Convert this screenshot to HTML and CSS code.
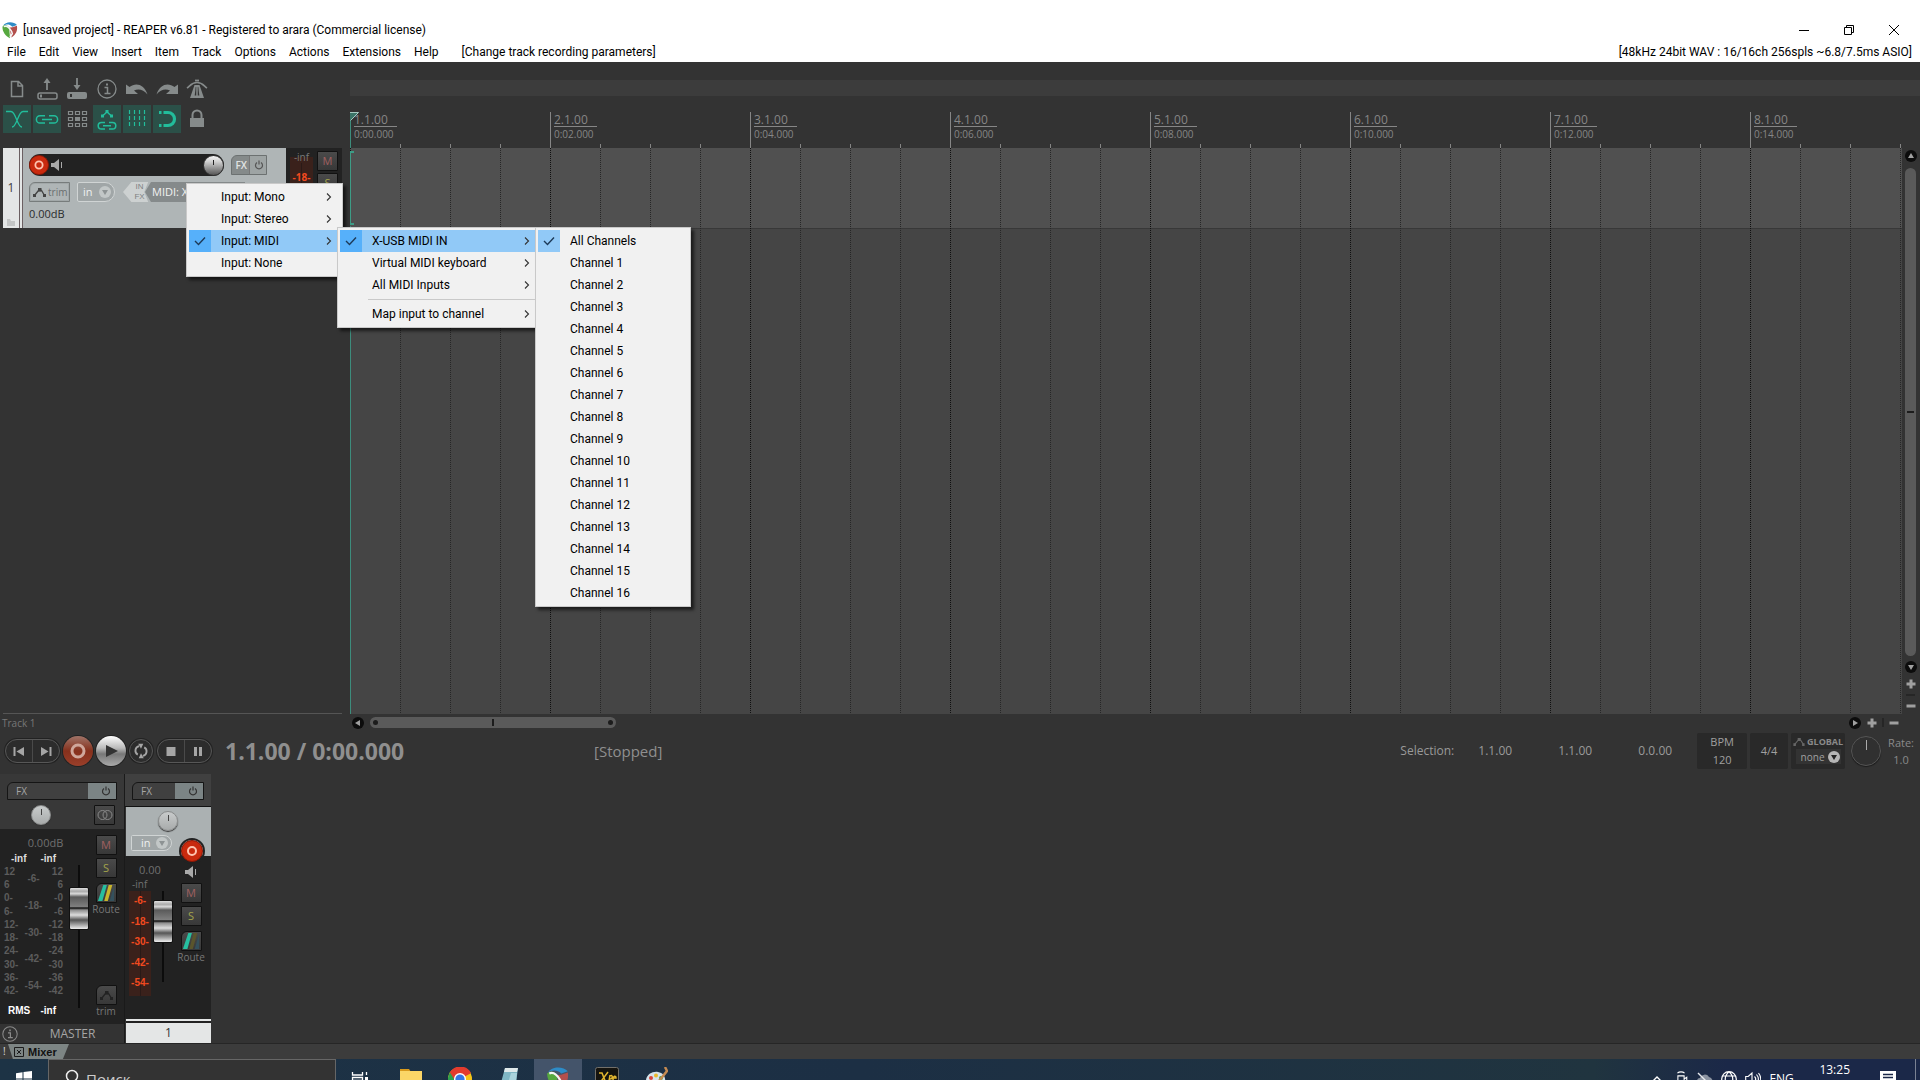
FILE: index.html
```html
<!DOCTYPE html>
<html lang="en">
<head>
<meta charset="utf-8">
<title>[unsaved project] - REAPER v6.81</title>
<link rel="stylesheet" href="styles.css">
</head>
<body>
<svg class="defs" aria-hidden="true">
  <symbol id="power" viewBox="0 0 10 10"><path d="M3 2.500a3.500 3.500 0 1 0 4 0M5 .5v4" fill="none" stroke="currentColor" stroke-width="1.200"/></symbol>
  <symbol id="drop" viewBox="0 0 12 12"><circle cx="6" cy="6" r="6" fill="currentColor"/><path d="M3 4h6l-3 5z" class="drop-arrow"/></symbol>
  <symbol id="speaker" viewBox="0 0 12 12"><path d="M0 4h3l5-4v12L3 8H0z" fill="currentColor"/><path d="M10.500 3v6" stroke="currentColor"/></symbol>
  <symbol id="rec" viewBox="0 0 22 22"><circle cx="11" cy="11" r="10.500" fill="#c92a0e" stroke="#8c1705"/><circle cx="11" cy="11" r="4" fill="none" stroke="#ffc4b0" stroke-width="2"/></symbol>
  <symbol id="env" viewBox="0 0 13 9"><path d="M1.500 7.500l4-5 3 0 3 5" fill="none" stroke="currentColor" stroke-width="1.300"/><path d="M0 6h3v3H0zM5 0h3.500v3.500H5zM10 6h3v3h-3z" fill="currentColor"/></symbol>
  <symbol id="chev" viewBox="0 0 6 8"><path d="M1 .5L4.500 4 1 7.500" fill="none" stroke="#333" stroke-width="1.100"/></symbol>
  <symbol id="check" viewBox="0 0 12 10"><path d="M1 5l3.500 3.500L11 1.500" fill="none" stroke="#1d3a58" stroke-width="1.400"/></symbol>
  <symbol id="reaper" viewBox="0 0 20 22"><path d="M1 5C4-1 15-1 19 4l-6 2C9 2 4 3 1 5z" fill="#2e8cc7"/><path d="M0 6c3-3 8-2 9 2l1 13C4 18 0 12 0 6z" fill="#56a83f"/><path d="M9 7c3 1 7-1 10-2 1 6-1 11-7 15z" fill="#b34f4c"/><path d="M2 6c4-2 7 1 10 6l1 3-3 5" fill="none" stroke="#f4f4f4" stroke-width="2"/></symbol>
  <symbol id="arrow" viewBox="0 0 12 12"><circle cx="6" cy="6" r="6" fill="#0c0c0c"/><path d="M6 3l3 5H3z" fill="#a0a0a0"/></symbol>
  <symbol id="plus" viewBox="0 0 10 10"><path d="M5 .5v9M.5 5h9" stroke="#a0a0a0" stroke-width="3"/></symbol>
  <symbol id="minus" viewBox="0 0 10 10"><path d="M.5 5h9" stroke="#a0a0a0" stroke-width="3"/></symbol>
  <symbol id="info" viewBox="0 0 20 20"><circle cx="10" cy="10" r="9" fill="none" stroke="currentColor" stroke-width="1.300"/><path d="M7.500 8.500h3v5.500M7.500 14.500h6" fill="none" stroke="currentColor" stroke-width="1.500"/><path d="M9 4.500h2v2H9z" fill="currentColor"/></symbol>
</svg>

<header class="window-head">
  <div class="titlebar">
    <svg class="app-icon" viewBox="0 0 20 22"><use href="#reaper"/></svg>
    <span class="title">[unsaved project] - REAPER v6.81 - Registered to arara (Commercial license)</span>
    <div class="window-buttons">
      <button aria-label="Minimize"><svg viewBox="0 0 12 12"><path d="M1 6.500h10" stroke="#000"/></svg></button>
      <button aria-label="Restore"><svg viewBox="0 0 12 12"><path d="M1.500 3.500h7v7h-7zM3.500 3.500v-2h7v7h-2" fill="none" stroke="#000"/></svg></button>
      <button aria-label="Close"><svg viewBox="0 0 12 12"><path d="M1 1l10 10M11 1L1 11" stroke="#000"/></svg></button>
    </div>
  </div>
  <nav class="menubar">
    <button>File</button><button>Edit</button><button>View</button><button>Insert</button><button>Item</button><button>Track</button><button>Options</button><button>Actions</button><button>Extensions</button><button>Help</button>
    <span class="last-action">[Change track recording parameters]</span>
    <span class="audio-info">[48kHz 24bit WAV : 16/16ch 256spls ~6.8/7.5ms ASIO]</span>
  </nav>
</header>

<section class="top">
  <div class="toolbar">
    <button aria-label="New project"><svg viewBox="0 0 28 28"><path d="M8.500 6.500h7l4 4v11h-11zM15 6.500v4.500h4.500" fill="none" stroke="currentColor" stroke-width="1.500"/></svg></button>
    <button aria-label="Open project"><svg viewBox="0 0 28 28"><rect x="5" y="18" width="19" height="6" rx="2" fill="none" stroke="currentColor" stroke-width="1.500"/><path d="M8 19.500v3" stroke="currentColor" stroke-width="2"/><path d="M14 15V7" stroke="currentColor" stroke-width="1.800"/><path d="M10.500 8L14 3l3.500 5z" fill="currentColor"/></svg></button>
    <button aria-label="Save project"><svg viewBox="0 0 28 28"><path d="M6 17h16a2 2 0 0 1 2 2v3a2 2 0 0 1-2 2H6a2 2 0 0 1-2-2v-3a2 2 0 0 1 2-2zm1 2v3h2v-3z" fill="currentColor" fill-rule="evenodd"/><path d="M14 3v7" stroke="currentColor" stroke-width="1.800"/><path d="M10.500 10L14 15l3.500-5z" fill="currentColor"/></svg></button>
    <button aria-label="Project settings"><svg viewBox="0 0 28 28"><use href="#info" x="4" y="4" width="20" height="20"/></svg></button>
    <button aria-label="Undo"><svg viewBox="0 0 28 28"><path d="M3 9.500l3.500 2.500c6-5 15-3 18 7.500-4-5-9-6-13.500-4l4 3.500H3z" fill="currentColor"/></svg></button>
    <button aria-label="Redo"><svg viewBox="0 0 28 28"><path d="M25 9.500L21.500 12c-6-5-15-3-18 7.500 4-5 9-6 13.500-4L13 19h12z" fill="currentColor"/></svg></button>
    <button aria-label="Metronome"><svg viewBox="0 0 28 28"><path d="M11.500 10h5l4.500 13H7z" fill="currentColor"/><path d="M12.700 12l-1 8.500h4.600l-1-8.500z" fill="#333"/><path d="M14 11v10" stroke="currentColor" stroke-width="1.500"/><path d="M4 13c3-2 4.500-5.500 10-5.500s7 3.500 10 5.500" fill="none" stroke="currentColor" stroke-width="1.700"/><path d="M12 5.500h4" stroke="currentColor" stroke-width="1.800"/></svg></button>
    <button class="on" aria-label="Auto crossfade"><svg viewBox="0 0 28 28"><path d="M3 6.500h5c5 0 6 15.500 11 15.500M25 6.500h-5c-5 0-6 15.500-11 15.500" fill="none" stroke="currentColor" stroke-width="1.300"/></svg></button>
    <button class="on" aria-label="Item grouping"><svg viewBox="0 0 28 28"><path d="M12 18H7a3.600 3.600 0 0 1 0-7.200h5M16 10.800h5a3.600 3.600 0 0 1 0 7.200h-5M9 14.400h10" fill="none" stroke="currentColor" stroke-width="1.500"/></svg></button>
    <button aria-label="Ripple editing"><svg viewBox="0 0 28 28"><path d="M5.500 6.500h4v3h-4zM12.500 6.500h4v3h-4zM19.500 6.500h4v3h-4zM5.500 12.500h4v3h-4zM19.500 12.500h4v3h-4zM5.500 18.500h4v3h-4zM12.500 18.500h4v3h-4zM19.500 18.500h4v3h-4z" fill="none" stroke="currentColor" stroke-width="1.200"/><path d="M12 12h5v4h-5z" fill="currentColor"/></svg></button>
    <button class="on" aria-label="Envelope move"><svg viewBox="0 0 28 28"><path d="M9.500 11l4.500-4 4.500 4" fill="none" stroke="currentColor" stroke-width="1.400"/><path d="M8 9.500h3v3H8zM12.500 5h3v3h-3zM17 9.500h3v3h-3z" fill="currentColor"/><path d="M12 24H8.500a3.300 3.300 0 0 1 0-6.600H12M16 17.400h3.500a3.300 3.300 0 0 1 0 6.600H16M10 20.700h8" fill="none" stroke="currentColor" stroke-width="1.500"/></svg></button>
    <button class="on" aria-label="Grid lines"><svg viewBox="0 0 28 28"><path d="M6.500 5v18M11.500 5v18M16.500 5v18M21.500 5v18" stroke="currentColor" stroke-width="1.200" stroke-dasharray="4 2"/></svg></button>
    <button class="on" aria-label="Snapping"><svg viewBox="0 0 28 28"><path d="M10.500 7.500h4.500a6.500 6.500 0 0 1 0 13h-4.500" fill="none" stroke="currentColor" stroke-width="3.200"/><path d="M6 6h2.500v3H6zM6 19h2.500v3H6z" fill="currentColor"/></svg></button>
    <button aria-label="Locking"><svg viewBox="0 0 28 28"><path d="M7 13h14v9H7z" fill="currentColor"/><path d="M9.500 13v-3a4.500 4.500 0 0 1 9 0v3" fill="none" stroke="currentColor" stroke-width="2"/></svg></button>
  </div>
  <div class="timeline-head">
    <div class="region-bar"></div>
    <div class="ruler">
      <svg class="playhead" viewBox="0 0 9 9"><path d="M0 0h9L0 9z" fill="#3a7568"/><path d="M0 .5h8.500L.5 8.500" fill="none" stroke="#a5c9c0"/></svg>
      <div class="mark mark-first"><span class="beat">1.1.00</span><span class="time">0:00.000</span></div>
      <div class="mark"><span class="beat">2.1.00</span><span class="time">0:02.000</span></div>
      <div class="mark"><span class="beat">3.1.00</span><span class="time">0:04.000</span></div>
      <div class="mark"><span class="beat">4.1.00</span><span class="time">0:06.000</span></div>
      <div class="mark"><span class="beat">5.1.00</span><span class="time">0:08.000</span></div>
      <div class="mark"><span class="beat">6.1.00</span><span class="time">0:10.000</span></div>
      <div class="mark"><span class="beat">7.1.00</span><span class="time">0:12.000</span></div>
      <div class="mark"><span class="beat">8.1.00</span><span class="time">0:14.000</span></div>
    </div>
  </div>
</section>

<main class="workspace">
  <section class="tracks">
    <div class="track">
      <div class="track-no"><span>1</span><svg viewBox="0 0 8 7"><path d="M0 0h3l1 2h4v5H0z" fill="#c3c5c5"/></svg></div>
      <div class="track-edge"></div>
      <div class="track-panel">
        <div class="panel-row">
          <div class="name-bar">
            <button class="rec-btn" aria-label="Record arm"><svg viewBox="0 0 22 22"><use href="#rec"/></svg></button>
            <svg class="speaker" viewBox="0 0 12 12"><use href="#speaker"/></svg>
            <button class="knob-metal" aria-label="Volume"></button>
          </div>
          <button class="fx-btn"><span>FX</span><span class="fx-power"><svg viewBox="0 0 10 10"><use href="#power"/></svg></span></button>
        </div>
        <div class="panel-row panel-row-2">
          <button class="trim-btn"><svg viewBox="0 0 13 9"><use href="#env"/></svg>trim</button>
          <label class="pick pick-in"><select aria-label="Monitor"><option>in</option></select><svg viewBox="0 0 12 12"><use href="#drop"/></svg></label>
          <button class="input-btn"><span class="in-fx"><span>IN</span><span>FX</span></span><span class="input-name">MIDI: X-USB</span></button>
        </div>
        <span class="track-db">0.00dB</span>
      </div>
      <div class="track-meter">
        <div class="tm-scale"><span class="tm-inf">-inf</span><span class="tm-red">-18-</span></div>
        <div class="tm-buttons"><button class="sq mute">M</button><button class="sq solo">S</button></div>
      </div>
    </div>
    <div class="tracks-rule"></div>
  </section>
  <section class="arrange">
    <div class="lane"></div>
    <svg class="grid" aria-hidden="true">
      <defs><pattern id="gridp" width="200" height="2" patternUnits="userSpaceOnUse"><path d="M0 0h1v1H0z" fill="#101010"/><path d="M50 0h1v1h-1zM100 0h1v1h-1zM150 0h1v1h-1z" fill="#262626"/></pattern></defs>
      <rect width="100%" height="100%" fill="url(#gridp)"/>
    </svg>
    <div class="cursor"></div>
    <div class="bracket"></div>
  </section>
  <aside class="vscroll">
    <svg viewBox="0 0 12 12"><use href="#arrow"/></svg>
    <div class="vbar"></div>
    <svg class="flip" viewBox="0 0 12 12"><use href="#arrow"/></svg>
    <svg class="zoom" viewBox="0 0 10 10"><use href="#plus"/></svg>
    <i></i>
    <svg class="zoom" viewBox="0 0 10 10"><use href="#minus"/></svg>
  </aside>
</main>

<div class="hscroll">
  <span class="track-caption">Track 1</span>
  <svg class="left" viewBox="0 0 12 12"><use href="#arrow"/></svg>
  <div class="hbar"><b></b><i></i><b></b></div>
  <svg class="right" viewBox="0 0 12 12"><use href="#arrow"/></svg>
  <svg class="zoom" viewBox="0 0 10 10"><use href="#plus"/></svg>
  <i></i>
  <svg class="zoom" viewBox="0 0 10 10"><use href="#minus"/></svg>
</div>

<section class="transport">
  <div class="pill">
    <button aria-label="Go to start"><svg viewBox="0 0 12 12"><path d="M1.500 2v9" stroke="currentColor" stroke-width="2"/><path d="M11 2v9L3.500 6.500z" fill="currentColor"/></svg></button>
    <button aria-label="Go to end"><svg viewBox="0 0 12 12"><path d="M10.500 2v9" stroke="currentColor" stroke-width="2"/><path d="M1 2v9l7.500-4.500z" fill="currentColor"/></svg></button>
  </div>
  <button class="round record" aria-label="Record"><svg viewBox="0 0 30 30"><circle cx="15" cy="15" r="6" fill="none" stroke="#cfa79b" stroke-width="3"/></svg></button>
  <button class="round play" aria-label="Play"><svg viewBox="0 0 30 30"><path d="M10 9l12 6-12 6z" fill="#333"/></svg></button>
  <button class="round repeat" aria-label="Repeat"><svg viewBox="0 0 24 24"><path d="M8.500 16A5 5 0 0 1 10 6.700M15.500 8A5 5 0 0 1 14 17.300" fill="none" stroke="#a5a5a5" stroke-width="2"/><path d="M9 4h5.500L12 9.500zM15 20H9.500l2.500-5.500z" fill="#a5a5a5"/></svg></button>
  <div class="pill">
    <button aria-label="Stop"><svg viewBox="0 0 12 12"><path d="M1.500 2h9v9h-9z" fill="currentColor"/></svg></button>
    <button aria-label="Pause"><svg viewBox="0 0 12 12"><path d="M2 2h3v9H2zM7 2h3v9H7z" fill="currentColor"/></svg></button>
  </div>
  <span class="position">1.1.00 / 0:00.000</span>
  <span class="state">[Stopped]</span>
  <div class="selection"><span class="sel-label">Selection:</span><span>1.1.00</span><span>1.1.00</span><span>0.0.00</span></div>
  <div class="box bpm"><span>BPM</span><span>120</span></div>
  <div class="box sig">4/4</div>
  <div class="box global">
    <span class="global-label"><svg viewBox="0 0 13 9"><use href="#env"/></svg>GLOBAL</span>
    <label class="pick pick-global"><select aria-label="Global automation"><option>none</option></select><svg viewBox="0 0 12 12"><use href="#drop"/></svg></label>
  </div>
  <button class="rate-knob" aria-label="Play rate"></button>
  <div class="rate"><span>Rate:</span><span>1.0</span></div>
</section>

<section class="mixer">
  <div class="strip master">
    <div class="strip-head">
      <button class="fx-slot"><span>FX</span><span class="slot-power"><svg viewBox="0 0 10 10"><use href="#power"/></svg></span></button>
      <div class="pan-row">
        <button class="knob-flat" aria-label="Pan"></button>
        <button class="sq mono" aria-label="Mono"><svg viewBox="0 0 16 12"><circle cx="5.500" cy="6" r="4.500"/><circle cx="10.500" cy="6" r="4.500"/></svg></button>
      </div>
    </div>
    <div class="strip-body">
      <div class="levels">
        <span class="gain">0.00dB</span>
        <div class="peaks"><span>-inf</span><span>-inf</span></div>
        <div class="scales">
          <div class="scale"><span>12</span><span>6</span><span>0-</span><span>6-</span><span>12-</span><span>18-</span><span>24-</span><span>30-</span><span>36-</span><span>42-</span></div>
          <div class="scale scale-mid"><span>-6-</span><span>-18-</span><span>-30-</span><span>-42-</span><span>-54-</span></div>
          <div class="scale scale-right"><span>12</span><span>6</span><span>-0</span><span>-6</span><span>-12</span><span>-18</span><span>-24</span><span>-30</span><span>-36</span><span>-42</span></div>
        </div>
        <div class="peaks rms"><span>RMS</span><span>-inf</span></div>
      </div>
      <input class="fader fader-master" type="range" min="0" max="100" value="78" aria-label="Master volume">
      <div class="strip-buttons">
        <button class="sq mute">M</button>
        <button class="sq solo">S</button>
        <button class="sq route" aria-label="Route"><svg viewBox="0 0 20 20"><path d="M1 19L7 1h4L6 19z" fill="#27bfa0"/><path d="M8 19l5-18h4l-5 18z" fill="#c9b52c"/><path d="M14 19l5-17v17z" fill="#34505c"/></svg></button>
        <span class="cap">Route</span>
        <button class="sq trim" aria-label="Trim"><svg viewBox="0 0 13 9"><use href="#env"/></svg></button>
        <span class="cap">trim</span>
      </div>
    </div>
    <div class="strip-foot"><svg viewBox="0 0 20 20"><use href="#info"/></svg><span>MASTER</span></div>
  </div>

  <div class="strip channel">
    <div class="chan-head"><button class="fx-slot"><span>FX</span><span class="slot-power"><svg viewBox="0 0 10 10"><use href="#power"/></svg></span></button></div>
    <div class="chan-light">
      <button class="knob-flat" aria-label="Pan"></button>
      <label class="pick pick-in"><select aria-label="Monitor"><option>in</option></select><svg viewBox="0 0 12 12"><use href="#drop"/></svg></label>
      <button class="rec-btn chan-rec" aria-label="Record arm"><svg viewBox="0 0 22 22"><use href="#rec"/></svg></button>
    </div>
    <div class="chan-body">
      <div class="chan-levels">
        <span class="gain">0.00</span>
        <span class="chan-inf">-inf</span>
        <div class="chan-meter"><span>-6-</span><span>-18-</span><span>-30-</span><span>-42-</span><span>-54-</span></div>
      </div>
      <input class="fader fader-chan" type="range" min="0" max="100" value="82" aria-label="Track volume">
      <div class="strip-buttons">
        <svg class="speaker" viewBox="0 0 12 12"><use href="#speaker"/></svg>
        <button class="sq mute">M</button>
        <button class="sq solo">S</button>
        <button class="sq route" aria-label="Route"><svg viewBox="0 0 20 20"><path d="M1 19L7 1h4L6 19z" fill="#27bfa0"/><path d="M8 19l5-18h4l-5 18z" fill="#5a552c"/><path d="M14 19l5-17v17z" fill="#34505c"/></svg></button>
        <span class="cap">Route</span>
      </div>
    </div>
    <div class="chan-foot">1</div>
  </div>
</section>

<div class="docker"><span class="bang">!</span><button class="dock-tab"><svg viewBox="0 0 10 10"><path d="M.5.5h9v9h-9zM3 3l4 4M7 3L3 7" fill="none" stroke="#1c1c1c"/></svg>Mixer</button></div>

<footer class="taskbar">
  <button class="start" aria-label="Start"><svg viewBox="0 0 16 16"><path d="M0 2.200l6.500-1v6.300H0zM7.500 1L16 0v7.500H7.500zM0 8.500h6.500v6.300l-6.500-1zM7.500 8.500H16V16l-8.500-1z" fill="#fff"/></svg></button>
  <label class="search"><svg viewBox="0 0 16 20"><circle cx="9" cy="7" r="5.500" fill="none" stroke="#eee" stroke-width="1.500"/><path d="M5.500 11L1 17" stroke="#eee" stroke-width="1.500"/></svg><input type="text" placeholder="Поиск" aria-label="Поиск"></label>
  <button class="task task-view" aria-label="Task view"><svg viewBox="0 0 24 24"><path d="M4.500 5v3h10V5M4.500 19v-3h10v3M4.500 10.500h10v3h-10zM18.500 5v3M18.500 15v4" fill="none" stroke="#fff" stroke-width="1.300"/><path d="M17 10h3v3h-3z" fill="#fff"/></svg></button>
  <button class="task" aria-label="Explorer"><svg viewBox="0 0 24 24"><path d="M1 2h9l2 3H1z" fill="#d99a1c"/><path d="M1 4h22v18H1z" fill="#fbd667"/><path d="M6 14h12v8H6z" fill="#3b93d6"/></svg></button>
  <button class="task" aria-label="Chrome"><svg viewBox="0 0 24 24"><circle cx="12" cy="12" r="12" fill="#f5c518"/><path d="M12 12L2 5.500A12 12 0 0 1 22.500 6.500z" fill="#e23b2e"/><path d="M12 12L2 5.500A12 12 0 0 0 12 24z" fill="#2da04e"/><path d="M12 6h11a12 12 0 0 0-21-.5L6 12z" fill="#e23b2e"/><circle cx="12" cy="12" r="6" fill="#fff"/><circle cx="12" cy="12" r="4.600" fill="#3578e5"/></svg></button>
  <button class="task" aria-label="Notepad"><svg viewBox="0 0 24 24"><path d="M8 1h13l-3 22H2z" fill="#7fb6c4"/><path d="M8 1h13l-1 4H7z" fill="#dfe9ea"/><path d="M14 6h6l-2 17h-9z" fill="#a9d3dc"/></svg></button>
  <button class="task active" aria-label="REAPER"><svg viewBox="0 0 20 22"><use href="#reaper"/></svg></button>
  <button class="task" aria-label="X-Edit"><svg viewBox="0 0 24 24"><rect x=".5" y=".5" width="23" height="23" rx="2" fill="#15140f" stroke="#73706a"/><path d="M4 6l3 0 4 10 2 0M13 5L4 17M15 8l-1 6M15 9c3-2 3 3 0 3M18 11h3c0-3-3-2-3 1s3 2 3 1" fill="none" stroke="#e3b72f" stroke-width="1.500"/></svg></button>
  <button class="task" aria-label="Paint"><svg viewBox="0 0 24 24"><path d="M2 16C1 8 8 4 14 5s8 6 7 11-6 8-11 7-8-3-8-7z" fill="#d5e3ea"/><circle cx="7" cy="11" r="2" fill="#d8453b"/><circle cx="12" cy="8.500" r="2" fill="#e9b92c"/><circle cx="17" cy="11" r="2" fill="#45a44b"/><circle cx="6" cy="16" r="2" fill="#3c7ed0"/><path d="M21 0l2 4-8 10" fill="none" stroke="#c58b52" stroke-width="2.500"/></svg></button>
  <div class="tray">
    <svg viewBox="0 0 16 16"><path d="M3.500 10.500L8 6l4.500 4.500" fill="none" stroke="#fff" stroke-width="1.400"/></svg>
    <svg viewBox="0 0 16 18"><path d="M4.500 5.500h7v10h-7zM11.500 9l3-2v7l-3-2M4 2.500c2-2 6-2 8 0" fill="none" stroke="#fff" stroke-width="1.200"/></svg>
    <svg viewBox="0 0 16 16"><path d="M3 13a3 3 0 0 1 0-6 5 5 0 0 1 9-1 4 4 0 0 1 2 7z" fill="#8b93a1"/><path d="M1 2l13 13" stroke="#e8eaee" stroke-width="1.400"/></svg>
    <svg viewBox="0 0 16 16"><path d="M8 .7a7.300 7.300 0 1 0 0 14.600A7.300 7.300 0 0 0 8 .7zM8 .7C3 5 3 11 8 15.300M8 .7c5 4.300 5 10.300 0 14.600M1.500 5h13M1.500 11h13" fill="none" stroke="#fff" stroke-width="1.200"/></svg>
    <svg viewBox="0 0 16 16"><path d="M.7 5.500h2.500L7 2v12l-3.800-3.500H.7zM9.500 5.500c1.500 1.500 1.500 3.500 0 5M11.500 3.500c2.500 3 2.500 6 0 9M13.500 2c3 4 3 8 0 12" fill="none" stroke="#fff" stroke-width="1.100"/></svg>
    <span class="lang">ENG</span>
    <span class="clock">13:25</span>
    <svg class="note" viewBox="0 0 16 16"><path d="M0 0h16v12H9l-3 3v-3H0z" fill="#fff"/><path d="M3 3.500h10M3 6.500h10" stroke="#1b2848" stroke-width="1.500"/></svg>
    <i></i>
  </div>
</footer>

<ul class="menu menu-root">
  <li><button>Input: Mono</button><svg class="chev" viewBox="0 0 6 8"><use href="#chev"/></svg></li>
  <li><button>Input: Stereo</button><svg class="chev" viewBox="0 0 6 8"><use href="#chev"/></svg></li>
  <li class="sel"><span class="tick"><svg viewBox="0 0 12 10"><use href="#check"/></svg></span><button>Input: MIDI</button><svg class="chev" viewBox="0 0 6 8"><use href="#chev"/></svg>
    <ul class="menu menu-midi">
      <li class="sel"><span class="tick"><svg viewBox="0 0 12 10"><use href="#check"/></svg></span><button>X-USB MIDI IN</button><svg class="chev" viewBox="0 0 6 8"><use href="#chev"/></svg>
        <ul class="menu menu-channels">
          <li><span class="tick tick-soft"><svg viewBox="0 0 12 10"><use href="#check"/></svg></span><button>All Channels</button></li>
          <li><button>Channel 1</button></li>
          <li><button>Channel 2</button></li>
          <li><button>Channel 3</button></li>
          <li><button>Channel 4</button></li>
          <li><button>Channel 5</button></li>
          <li><button>Channel 6</button></li>
          <li><button>Channel 7</button></li>
          <li><button>Channel 8</button></li>
          <li><button>Channel 9</button></li>
          <li><button>Channel 10</button></li>
          <li><button>Channel 11</button></li>
          <li><button>Channel 12</button></li>
          <li><button>Channel 13</button></li>
          <li><button>Channel 14</button></li>
          <li><button>Channel 15</button></li>
          <li><button>Channel 16</button></li>
        </ul>
      </li>
      <li><button>Virtual MIDI keyboard</button><svg class="chev" viewBox="0 0 6 8"><use href="#chev"/></svg></li>
      <li><button>All MIDI Inputs</button><svg class="chev" viewBox="0 0 6 8"><use href="#chev"/></svg></li>
      <li class="sep"></li>
      <li><button>Map input to channel</button><svg class="chev" viewBox="0 0 6 8"><use href="#chev"/></svg></li>
    </ul>
  </li>
  <li><button>Input: None</button></li>
</ul>
</body>
</html>
```

FILE: styles.css
```css
* { box-sizing: border-box; }
body {
  margin: 0;
  min-height: 100vh;
  display: flex;
  flex-direction: column;
  position: relative;
  background: #333;
  color: #9a9a9a;
  font: 12px/16px "Open Sans", "Noto Sans", sans-serif;
  overflow: hidden;
}
button, select, input {
  font: inherit;
  color: inherit;
  background: none;
  border: 0;
  padding: 0;
  margin: 0;
}
svg { display: block; flex: none; }
.defs { position: absolute; width: 0; height: 0; }

/* window head */
.window-head { background: #fff; color: #000; height: 62px; padding-top: 18px; font-family: Roboto, "Open Sans", sans-serif; }
.titlebar { display: flex; align-items: center; height: 24px; padding: 0 4px 0 2px; }
.app-icon { width: 16px; height: 17px; margin-right: 5px; }
.title { flex: 1; }
.window-buttons { display: flex; }
.window-buttons button { width: 45px; height: 22px; display: grid; place-items: center; }
.window-buttons svg { width: 12px; height: 12px; }
.menubar { display: flex; align-items: center; height: 19px; padding: 0 8px 0 7px; gap: 13px; }
.last-action { margin-left: 10px; }
.audio-info { margin-left: auto; }

/* toolbar and ruler */
.top { display: grid; grid-template-columns: 350px 1fr; height: 86px; }
.toolbar {
  display: grid;
  grid-template-columns: repeat(7, 28px);
  grid-auto-rows: 28px;
  gap: 2px;
  padding: 13px 0 0 3px;
  color: #868b8b;
}
.toolbar svg { width: 28px; height: 28px; }
.toolbar .on { background: #2b5048; color: #22bd9b; }
.timeline-head { display: flex; flex-direction: column; }
.region-bar { height: 16px; margin: 18px 1px 16px 0; background: #3c3c3c; }
.ruler {
  position: relative;
  flex: 1;
  display: flex;
  margin-right: 18px;
  overflow: hidden;
  background: repeating-linear-gradient(90deg, #868686 0 1px, transparent 1px 50px) 0 100% / 100% 4px no-repeat;
}
.mark {
  flex: 0 0 200px;
  border-left: 1px solid #868686;
  padding: 1px 0 0 3px;
  display: flex;
  flex-direction: column;
  align-items: flex-start;
  color: #868686;
}
.mark-first { border-color: #3d8c7c; }
.beat { line-height: 14px; height: 14px; width: 43px; border-bottom: 1px solid #868686; }
.time { font-size: 10px; line-height: 14px; }
.playhead { position: absolute; left: 0; top: 0; width: 9px; height: 9px; }

/* track list */
.workspace { flex: 1; display: grid; grid-template-columns: 350px 1fr 18px; min-height: 0; }
.tracks { display: flex; flex-direction: column; padding: 0 8px 0 3px; }
.tracks-rule { margin-top: auto; border-top: 1px solid #555; }
.track { display: flex; height: 80px; color: #3c3f40; }
.track-no {
  width: 16px;
  background: #e4e6e6;
  display: flex;
  flex-direction: column;
  align-items: center;
  padding: 32px 0 2px;
  justify-content: space-between;
}
.track-no svg { width: 8px; height: 7px; }
.track-edge { width: 4px; background: #e4e6e6; border: solid #6b5f62; border-width: 0 1px; }
.track-panel { flex: 1; background: #afb5b6; padding: 6px 19px 0 6px; }
.panel-row { display: flex; align-items: center; gap: 7px; height: 22px; }
.panel-row-2 { margin: 5px 0 4px; }
.name-bar { flex: 1; height: 22px; background: #222; border-radius: 11px; display: flex; align-items: center; gap: 2px; }
.rec-btn { width: 20px; height: 20px; }
.rec-btn svg { width: 20px; height: 20px; }
.speaker { width: 12px; height: 12px; color: #aaa; }
.knob-metal {
  margin-left: auto;
  width: 21px;
  height: 21px;
  border-radius: 50%;
  border: 1px solid #333;
  background:
    linear-gradient(#222, #222) 50% 4px / 1px 5px no-repeat,
    linear-gradient(#f4f4f4, #d0d0d0 30%, #555);
}
.fx-btn {
  width: 36px;
  height: 20px;
  display: flex;
  align-items: center;
  border: 1px solid #6c7171;
  background: #858a8a;
  color: #e0e3e3;
  font-size: 10px;
  font-weight: 600;
  border-top-left-radius: 6px;
}
.fx-btn > span { flex: 1; line-height: 18px; padding-left: 2px; }
.fx-power { background: #9ea4a4; border-left: 1px solid #777; display: grid; place-items: center; height: 18px; color: #555; }
.fx-btn svg, .fx-slot svg { width: 10px; height: 10px; }
.trim-btn {
  width: 41px;
  height: 20px;
  display: flex;
  align-items: center;
  gap: 2px;
  padding-left: 3px;
  border: 1px solid #777c7c;
  border-top-left-radius: 6px;
  color: #6a6f70;
  font-size: 10px;
  box-shadow: inset 0 0 0 1px #a2a8a9;
}
.trim-btn svg { width: 13px; height: 9px; color: #444; }
.pick { display: flex; align-items: center; }
.pick select { appearance: none; flex: 1; width: 0; outline: 0; }
.pick svg { width: 12px; height: 12px; }
.pick-in {
  width: 38px;
  height: 20px;
  border: 1px solid #d0d4d4;
  border-radius: 2px 10px 10px 2px;
  background: #a0a6a7;
  color: #eef0f0;
  padding: 0 3px 0 5px;
  font-size: 11px;
}
.pick-in svg { color: #c2c7c7; }
.drop-arrow { fill: var(--arrow, #8d9394); }
.input-btn { width: 132px; height: 20px; display: flex; color: #f2f2f2; white-space: nowrap; overflow: hidden; font-size: 11px; margin-left: 1px; }
.in-fx {
  width: 28px;
  padding-left: 5px;
  height: 20px;
  background: #cdd1d1;
  color: #7d8283;
  clip-path: polygon(0 50%, 30% 0, 90% 0, 76% 50%, 90% 100%, 30% 100%);
  display: flex;
  flex-direction: column;
  align-items: center;
  font: 8px/10px "Liberation Sans", sans-serif;
}
.input-name {
  margin-left: -6px;
  padding-left: 7px;
  height: 20px;
  line-height: 19px;
  width: 100px;
  text-align: left;
  background: #858a8b;
  clip-path: polygon(0 50%, 6% 0, 100% 0, 100% 100%, 6% 100%);
}
.track-db { display: block; font-size: 11px; line-height: 14px; color: #2a2c2d; }
.track-meter { width: 56px; background: #222; display: flex; justify-content: space-between; padding: 3px 4px; font-size: 10px; }
.tm-scale { width: 23px; display: flex; flex-direction: column; font-weight: 700; text-align: center; }
.tm-inf { line-height: 12px; color: #777; font-weight: 400; background: linear-gradient(transparent 50%, #3a211b 50%); }
.tm-red { flex: 1; background: linear-gradient(90deg, #3a211b 11px, #2a1a17 11px 12px, #3a211b 12px); color: #f24a1f; padding-top: 6px; }
.tm-buttons { display: flex; flex-direction: column; gap: 2px; }
.sq {
  width: 21px;
  height: 20px;
  background: linear-gradient(#4a4a4a, #383838);
  border: 1px solid #111;
  border-radius: 1px;
  display: grid;
  place-items: center;
  font-size: 11px;
  line-height: 16px;
}
.mute { color: #a06060; }
.solo { color: #a3a34c; }

/* arrange view */
.arrange { position: relative; background: #454545; overflow: hidden; }
.lane { height: 81px; background: #505050; border-bottom: 1px solid #383838; }
.grid { position: absolute; inset: 0; width: 100%; height: 100%; }
.cursor { position: absolute; left: 0; top: 78px; bottom: 0; width: 1px; background: #3d8c7c; }
.bracket { position: absolute; left: 0; top: 3px; width: 4px; height: 74px; border: solid #3d9c86; border-width: 2px 0 2px 1px; }
.vscroll { display: flex; flex-direction: column; align-items: center; padding: 2px 1px 1px 0; }
.vscroll svg { width: 12px; height: 12px; }
.vscroll .zoom { width: 10px; height: 10px; margin: 2px 0; }
.vscroll i { width: 9px; height: 2px; background: #262626; margin: 3px 0; }
.vbar {
  flex: 1;
  width: 11px;
  margin: 6px 0 5px;
  border-radius: 6px;
  background: linear-gradient(#1c1c1c, #1c1c1c) 50% 50% / 7px 2px no-repeat #5a5a5a;
}
.flip { transform: rotate(180deg); margin-bottom: 4px; }
.hscroll { display: flex; align-items: center; height: 18px; padding: 0 21px 1px 0; }
.hscroll svg { width: 12px; height: 12px; }
.hscroll .zoom { width: 10px; height: 10px; }
.track-caption { width: 352px; padding-left: 2px; font-size: 10px; color: #777; }
.left { transform: rotate(-90deg); }
.right { transform: rotate(90deg); margin-left: auto; margin-right: 6px; }
.hscroll > i { width: 2px; height: 9px; background: #262626; margin: 0 5px; }
.hbar { width: 246px; height: 11px; margin-left: 6px; padding: 0 3px; border-radius: 6px; background: #5a5a5a; display: flex; align-items: center; justify-content: space-between; }
.hbar b { width: 5px; height: 5px; border-radius: 50%; background: #1c1c1c; }
.hbar i { width: 2px; height: 7px; background: #1c1c1c; }

/* transport */
.transport { display: flex; align-items: center; height: 42px; padding: 0 6px 4px 5px; font-size: 12px; }
.pill { display: flex; width: 55px; height: 24px; border: 1px solid #575757; border-radius: 12px; background: #2c2c2c; box-shadow: 0 0 0 1px #222; }
.pill button { flex: 1; display: grid; place-items: center; color: #a5a5a5; }
.pill button + button { border-left: 1px solid #4a4a4a; }
.pill svg { width: 12px; height: 12px; }
.round { border-radius: 50%; width: 30px; height: 30px; margin-left: 3px; box-shadow: 0 0 0 1px #222; }
.round svg { width: 100%; height: 100%; }
.record { background: linear-gradient(#a07468, #86301c 50%, #9a3f2a); }
.play { background: linear-gradient(#fff, #bbb 40%, #777 60%, #aaa); }
.repeat { width: 24px; height: 24px; margin: 0 4px 0 3px; border: 1px solid #575757; background: #2c2c2c; }
.position { font-size: 23px; line-height: 30px; font-weight: 700; color: #8f8f8f; width: 382px; padding-left: 13px; }
.state { font-size: 15px; color: #8f8f8f; }
.selection { margin-left: auto; display: flex; margin-right: 22px; }
.selection span { width: 80px; }
.selection span:last-child { width: auto; }
.selection .sel-label { width: 78px; }
.box { height: 36px; background: #292929; border-radius: 2px; display: flex; flex-direction: column; align-items: center; justify-content: space-around; font-size: 11px; margin-left: 3px; color: #a0a0a0; }
.bpm { width: 50px; }
.sig { width: 38px; }
.global { width: 54px; font-size: 10px; justify-content: flex-start; padding-top: 2px; }
.global-label { display: flex; align-items: center; gap: 2px; font-size: 9px; font-weight: 700; line-height: 14px; color: #8a8a8a; }
.global-label svg { width: 12px; height: 8px; color: #666; }
.pick-global { --arrow: #222; width: 45px; height: 15px; background: #333; padding: 0 1px 0 5px; }
.pick-global svg { color: #b5b5b5; }
.rate-knob { width: 30px; height: 30px; margin-left: 6px; border-radius: 50%; border: 1px solid #555; background: linear-gradient(#aaa, #aaa) 50% 3px / 1px 10px no-repeat #303030; box-shadow: 0 1px 1px #1c1c1c; }
.rate { display: flex; flex-direction: column; align-items: center; margin-left: 7px; font-size: 11px; line-height: 17px; color: #8a8a8a; }

/* mixer */
.mixer { display: flex; height: 269px; font-size: 11px; }
.strip { display: flex; flex-direction: column; }
.master { width: 125px; border-right: 1px solid #1a1a1a; }
.strip-head { height: 55px; padding: 8px 7px 0; background: #383838; }
.fx-slot {
  width: 100%;
  height: 18px;
  display: flex;
  border: 1px solid #151515;
  border-top-left-radius: 6px;
  background: #404040;
  color: #a5a5a5;
  font-size: 10px;
  line-height: 16px;
}
.fx-slot > span:first-child { flex: 1; text-align: left; padding-left: 8px; }
.slot-power { width: 28px; background: #7b8485; color: #333; display: grid; place-items: center; height: 16px; padding-left: 8px; }
.pan-row { display: flex; justify-content: space-between; padding: 5px 2px 0 24px; }
.knob-flat {
  width: 20px;
  height: 20px;
  border-radius: 50%;
  border: 1px solid #8a8c8c;
  background:
    linear-gradient(#444, #444) 50% 3px / 1px 6px no-repeat,
    linear-gradient(#c8cbcb, #a8abab);
  box-shadow: 0 1px 1px #333;
}
.mono svg { width: 16px; height: 12px; fill: none; stroke: #8a8a8a; }
.strip-body { flex: 1; display: flex; background: #222; padding-top: 6px; }
.levels { width: 67px; padding-left: 4px; color: #5c5c5c; }
.gain { display: block; text-align: center; padding-left: 20px; line-height: 16px; color: #707070; }
.peaks { display: flex; justify-content: space-between; padding: 0 11px 0 7px; color: #ddd; font: bold 10px/15px "Liberation Sans", sans-serif; }
.scales { display: flex; justify-content: space-between; height: 131px; font: bold 10px/12px "Liberation Sans", sans-serif; padding-right: 4px; margin-bottom: 6px; }
.scale { display: flex; flex-direction: column; justify-content: space-between; }
.scale-mid { padding: 7px 0 5px; text-align: center; }
.scale-right { text-align: right; }
.rms { padding-left: 4px; color: #fff; }
.fader { appearance: none; writing-mode: vertical-lr; direction: rtl; width: 20px; background: linear-gradient(#0c0c0c, #0c0c0c) 50% 0 / 2px 100% no-repeat; }
.fader::-webkit-slider-thumb {
  appearance: none;
  width: 20px;
  height: 43px;
  border: 1px solid #111;
  border-radius: 2px;
  background: linear-gradient(#e0e0e0, #aaa 8%, #d8d8d8 14%, #5a5a5a 22%, #808080 46%, #222 48%, #333 51%, #8a8a8a 53%, #ddd 66%, #555 78%, #999 88%, #eee);
}
.fader-master { height: 143px; margin: 30px 0 0 2px; }
.strip-buttons { display: flex; flex-direction: column; align-items: center; width: 30px; margin-left: 2px; gap: 3px; color: #777; font-size: 10px; }
.route svg { width: 18px; height: 18px; }
.route, .trim { border-top-left-radius: 6px; overflow: hidden; }
.route { margin-top: 2px; }
.trim { margin-top: auto; color: #222; }
.trim svg { width: 13px; height: 9px; }
.cap { line-height: 10px; margin-top: -2px; }
.strip-body .strip-buttons { padding-bottom: 8px; }
.strip-foot { height: 19px; background: #333; display: flex; align-items: center; color: #a5a5a5; font-size: 12px; padding-left: 2px; }
.strip-foot svg { width: 16px; height: 16px; color: #8a8a8a; }
.strip-foot span { flex: 1; text-align: center; padding-left: 3px; }
.channel { width: 86px; }
.chan-head { height: 34px; padding: 8px 7px 0; background: #404040; border-bottom: 1px solid #111; }
.chan-light { position: relative; height: 50px; margin-left: 1px; padding: 4px 5px; background: #abb1b2; display: flex; flex-direction: column; align-items: flex-start; gap: 4px; }
.chan-light .knob-flat { margin-left: 27px; }
.chan-light .pick-in { height: 16px; width: 41px; padding-left: 9px; }
.chan-rec { position: absolute; right: 8px; bottom: -6px; width: 22px; height: 22px; border-radius: 50%; box-shadow: 0 0 0 2px #222; }
.chan-rec svg { width: 22px; height: 22px; }
.chan-body { flex: 1; display: flex; background: #222; padding: 6px 0 23px; }
.chan-levels { width: 27px; padding-left: 4px; display: flex; flex-direction: column; white-space: nowrap; }
.chan-levels .gain { padding-left: 10px; text-align: left; }
.chan-inf { line-height: 13px; padding-left: 3px; color: #707070; font-size: 10px; }
.chan-meter {
  height: 105px;
  width: 22px;
  display: flex;
  flex-direction: column;
  justify-content: space-between;
  text-align: center;
  padding: 4px 0 7px;
  color: #f24a1f;
  font: bold 10px/12px "Liberation Sans", sans-serif;
  background: linear-gradient(90deg, #3a211b 11px, #2a1a17 11px 12px, #3a211b 12px);
}
.fader-chan { height: 91px; margin: 29px 0 0 1px; }
.channel .strip-buttons { margin-left: 3px; padding-top: 4px; }
.channel .speaker { margin-bottom: 2px; }
.chan-foot { height: 24px; margin-left: 1px; border-top: 2px solid #e4e6e6; background: linear-gradient(#222 2px, #e4e6e6 2px); color: #333; text-align: center; line-height: 24px; font-size: 12px; }

/* docker tabs */
.docker { display: flex; height: 16px; background: #3c3c3c; border-top: 1px solid #262626; }
.bang { width: 8px; padding-left: 3px; line-height: 14px; color: #ddd; font-size: 10px; }
.dock-tab { display: flex; align-items: center; gap: 4px; width: 61px; padding-left: 6px; background: #7d8584; color: #111; font: bold 11px/14px "Liberation Sans", sans-serif; clip-path: polygon(0 0, 100% 0, 90% 100%, 8% 100%); }
.dock-tab svg { width: 10px; height: 10px; }

/* taskbar */
.taskbar { display: flex; height: 21px; overflow: hidden; background: linear-gradient(90deg, #1d3345, #1c2f44 45%, #20343f 83%, #1b2848 90%); }
.taskbar > * { height: 40px; flex: none; }
.start { width: 48px; display: grid; place-items: center; }
.start svg { width: 16px; height: 16px; }
.search { width: 288px; display: flex; align-items: center; gap: 7px; padding-left: 14px; background: #333; border: 1px solid #666; }
.search svg { width: 16px; height: 20px; }
.search input { flex: 1; outline: 0; font-size: 15px; }
.search input::placeholder { color: #ccc; opacity: 1; }
.task { width: 48px; margin-right: 1px; display: grid; place-items: center; }
.task-view { margin-right: 3px; }
.task svg { width: 24px; height: 24px; }
.task.active { background: #44546a; }
.taskbar .tray { margin-left: auto; display: flex; align-items: center; gap: 8px; color: #fff; }
.tray svg { width: 16px; height: 16px; }
.lang { width: 24px; margin: 0 18px 0 0; }
.clock { align-self: flex-start; line-height: 22px; margin-right: 22px; }
.tray i { width: 1px; height: 100%; background: #7a8293; margin: 0 4px 0 11px; }

/* context menus */
.menu {
  position: absolute;
  margin: 0;
  padding: 2px;
  list-style: none;
  background: #f1f1f1;
  border: 1px solid #c9c9c9;
  box-shadow: 3px 3px 3px rgba(0, 0, 0, .6);
  color: #000;
  font-family: Roboto, "Open Sans", sans-serif;
}
.menu li { position: relative; display: flex; align-items: center; height: 22px; padding: 0 7px 0 32px; }
.menu button { flex: 1; text-align: left; white-space: nowrap; }
.menu .sel { background: #91c9f7; }
.menu .sep { height: 7px; padding: 0; }
.menu .sep::before { content: ""; flex: 1; margin-left: 28px; border-top: 1px solid #c9c9c9; }
.tick { width: 22px; height: 22px; margin: 0 10px 0 -32px; display: grid; place-items: center; background: #56b0fa; }
.tick-soft { background: #91c9f7; }
.tick svg { width: 12px; height: 10px; }
.chev { width: 6px; height: 8px; }
.menu-root { left: 186px; top: 183px; width: 157px; }
.menu-root > li { padding-right: 8px; }
.menu-midi { left: 148px; top: -3px; width: 199px; padding-right: 0; }
.menu-midi > li { padding-right: 5px; }
.menu-channels { left: 195px; top: -3px; width: 156px; }
```
